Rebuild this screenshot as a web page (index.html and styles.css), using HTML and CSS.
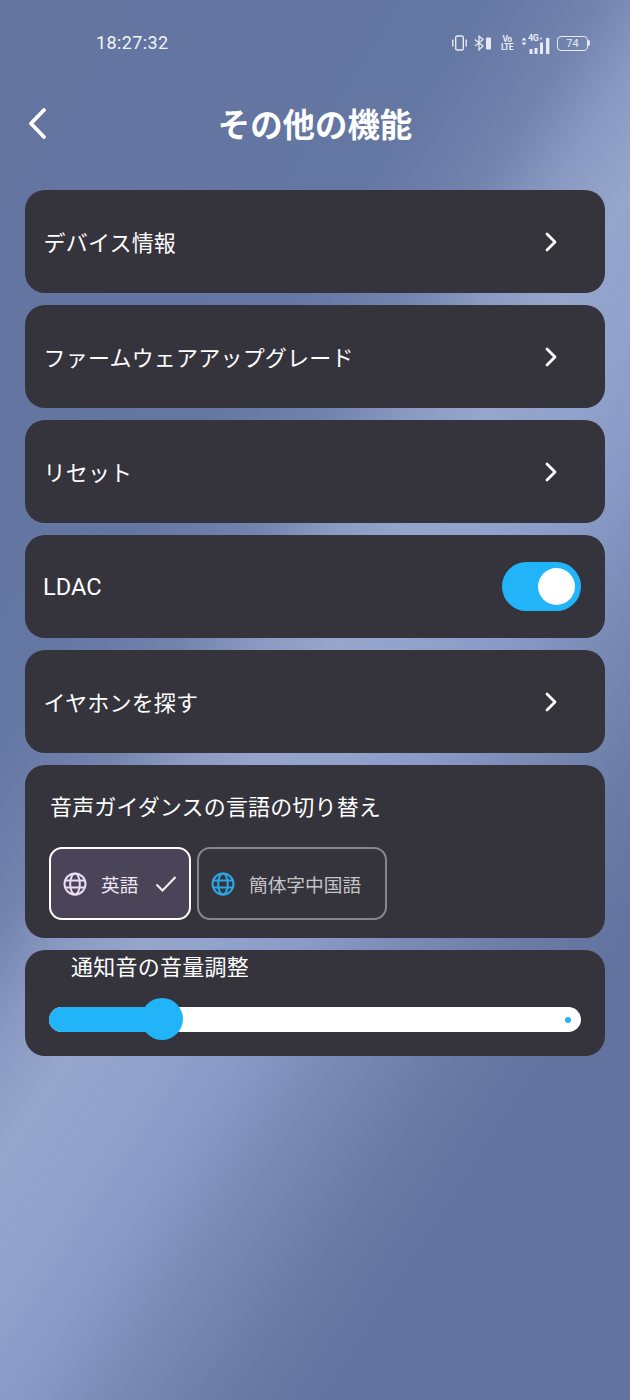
FILE: index.html
```html
<!DOCTYPE html>
<html lang="ja">
<head>
<meta charset="utf-8">
<title>その他の機能</title>
<link rel="stylesheet" href="styles.css">
</head>
<body>
<div class="screen">
  <div class="status">
    <span class="time">18:27:32</span>
    <div class="status-icons">
      <svg class="si-vib" width="15" height="16" viewBox="0 0 15 16" fill="none" stroke="#e6eaf4" stroke-width="1.400"><rect x="3.700" y="1" width="7.600" height="14" rx="1.500"/><path d="M0.800 4.500v7M14.200 4.500v7"/></svg>
      <svg class="si-bt" width="18" height="16" viewBox="0 0 18 16" fill="none" stroke="#e6eaf4" stroke-width="1.300"><path d="M1 4.500l8 6.500-4 3.800V1.200l4 3.300-8 6.500"/><rect x="12" y="2.500" width="5" height="12" rx="0.800" fill="#e6eaf4" stroke="none"/></svg>
      <span class="volte"><span>Vo</span><span>LTE</span></span>
      <span class="signal">
        <span class="net">4G</span>
        <svg width="29" height="17" viewBox="0 0 29 17" fill="#e6eaf4"><path d="M0.500 3.500l2.500-3 2.500 3zM0.500 5.500h5l-2.500 3z"/><circle cx="20" cy="1.500" r="1"/><rect x="8.500" y="12" width="3" height="5"/><rect x="13.500" y="11" width="3" height="6"/><rect x="19" y="5.500" width="3" height="11.500"/><rect x="25" y="1" width="3.400" height="16"/></svg>
      </span>
      <span class="battery"><span class="batt-body">74</span><span class="batt-tip"></span></span>
    </div>
  </div>
  <header class="topbar">
    <svg class="back" width="22" height="32" viewBox="0 0 22 32" fill="none" stroke="#fff" stroke-width="3.800" stroke-linecap="round" stroke-linejoin="round"><path d="M18 3L5 16.500 18 30"/></svg>
    <h1>その他の機能</h1>
  </header>
  <main class="list">
    <div class="card row"><span class="label">デバイス情報</span><svg class="chev" width="14" height="20" viewBox="0 0 14 20" fill="none" stroke="#fff" stroke-width="2.800" stroke-linecap="round" stroke-linejoin="round"><path d="M3 2l8 8-8 8"/></svg></div>
    <div class="card row"><span class="label">ファームウェアアップグレード</span><svg class="chev" width="14" height="20" viewBox="0 0 14 20" fill="none" stroke="#fff" stroke-width="2.800" stroke-linecap="round" stroke-linejoin="round"><path d="M3 2l8 8-8 8"/></svg></div>
    <div class="card row"><span class="label">リセット</span><svg class="chev" width="14" height="20" viewBox="0 0 14 20" fill="none" stroke="#fff" stroke-width="2.800" stroke-linecap="round" stroke-linejoin="round"><path d="M3 2l8 8-8 8"/></svg></div>
    <div class="card row ldac"><span class="latin">LDAC</span><span class="toggle"><span class="knob"></span></span></div>
    <div class="card row"><span class="label">イヤホンを探す</span><svg class="chev" width="14" height="20" viewBox="0 0 14 20" fill="none" stroke="#fff" stroke-width="2.800" stroke-linecap="round" stroke-linejoin="round"><path d="M3 2l8 8-8 8"/></svg></div>
    <div class="card lang">
      <div class="lang-title">音声ガイダンスの言語の切り替え</div>
      <div class="lang-opts">
        <div class="opt active">
          <svg width="24" height="24" viewBox="0 0 24 24" fill="none" stroke="#eadcf5" stroke-width="2"><circle cx="12" cy="12" r="10.500"/><ellipse cx="12" cy="12" rx="4.800" ry="10.500"/><path d="M2 8.500h20M2 15.500h20"/></svg>
          <span class="opt-label">英語</span>
          <svg class="check" width="22" height="18" viewBox="0 0 22 18" fill="none" stroke="#eee" stroke-width="2.200"><path d="M1.500 9.500l6 6L20.500 2"/></svg>
        </div>
        <div class="opt">
          <svg width="24" height="24" viewBox="0 0 24 24" fill="none" stroke="#29a9e8" stroke-width="2"><circle cx="12" cy="12" r="10.500"/><ellipse cx="12" cy="12" rx="4.800" ry="10.500"/><path d="M2 8.500h20M2 15.500h20"/></svg>
          <span class="opt-label">簡体字中国語</span>
        </div>
      </div>
    </div>
    <div class="card volume">
      <div class="vol-title">通知音の音量調整</div>
      <div class="slider">
        <span class="fill"></span>
        <span class="thumb"></span>
        <span class="dot"></span>
      </div>
    </div>
  </main>
</div>
</body>
</html>
```
FILE: styles.css
```css
* { box-sizing: border-box; }
html, body { margin: 0; padding: 0; }
body {
  width: 630px;
  height: 1400px;
  overflow: hidden;
  font-family: "Noto Sans CJK JP", "Noto Sans", sans-serif;
  color: #fff;
}
.screen {
  width: 630px;
  height: 1400px;
  padding: 0 25px;
  background: linear-gradient(123deg, #63749f 0%, #6476a2 31%, #7283ae 39%, #8a9ac2 44%, #95a5cb 49%, #91a2cc 54%, #8a9ac7 60%, #7a8bb6 66%, #6a7ba6 74%, #62739f 80%, #62739f 100%);
}
.status {
  height: 86px;
  padding: 30px 15px 0 71px;
  display: flex;
  justify-content: space-between;
  align-items: flex-start;
}
.time {
  font-family: Roboto, sans-serif;
  font-size: 18px;
  line-height: 26px;
  color: #f2f4f9;
  letter-spacing: 0.4px;
}
.status-icons {
  display: flex;
  align-items: center;
  gap: 7px;
  height: 26px;
}
.si-vib { margin-left: 2px; }
.si-bt { margin-right: 3px; }
.volte {
  display: flex;
  flex-direction: column;
  font-family: Roboto, sans-serif;
  font-size: 8.500px;
  line-height: 8px;
  font-weight: 700;
  letter-spacing: -0.5px;
  color: #e6eaf4;
  align-items: center;
  width: 10px;
  margin-right: 2px;
}
.signal { position: relative; display: block; width: 29px; height: 17px; }
.net {
  position: absolute;
  left: 7px;
  top: -1px;
  font: 700 9px/9px Roboto, sans-serif;
  letter-spacing: -0.3px;
  color: #e6eaf4;
}
.battery { display: flex; align-items: center; }
.batt-body {
  width: 31px;
  height: 15px;
  border: 1.300px solid #e6eaf4;
  border-radius: 4px;
  font: 400 11px/13px Roboto, sans-serif;
  text-align: center;
  color: #e6eaf4;
}
.batt-tip { width: 2px; height: 6px; background: #e6eaf4; border-radius: 0 2px 2px 0; }
.topbar {
  height: 79px;
  display: flex;
  align-items: center;
  justify-content: center;
  position: relative;
}
.topbar h1 {
  margin: 0 0 6px;
  font-size: 32.400px;
  line-height: 48px;
  font-weight: 700;
}
.back { position: absolute; left: 1px; top: 21px; }
.list {
  margin-top: 25px;
  display: flex;
  flex-direction: column;
  gap: 12px;
}
.card {
  background: #35343c;
  border-radius: 20px;
  width: 580px;
}
.row {
  height: 103px;
  padding: 0 47px 0 19px;
  display: flex;
  align-items: center;
  justify-content: space-between;
  font-size: 22px;
}
.label { margin-bottom: 2px; letter-spacing: 0.2px; margin-left: -0.500px; }
.ldac { padding-right: 24px; }
.latin { font-family: Roboto, sans-serif; font-size: 23.600px; margin-left: -1px; }
.chev { flex: none; }
.toggle {
  width: 79px;
  height: 49px;
  border-radius: 25px;
  background: #22b4f9;
  display: flex;
  align-items: center;
  justify-content: flex-end;
  padding-right: 6px;
}
.knob { width: 37px; height: 37px; border-radius: 50%; background: #fff; }
.lang {
  height: 173px;
  padding: 22px 24px 0;
}
.lang-title { font-size: 22px; line-height: 36px; padding-left: 1px; letter-spacing: 0.15px; }
.lang-opts { display: flex; gap: 6px; margin-top: 24px; }
.opt {
  height: 73px;
  width: 190px;
  border: 2px solid #88878c;
  border-radius: 13px;
  display: flex;
  align-items: center;
  padding: 0 0 0 12px;
  gap: 14px;
  color: #c4c4c8;
  font-size: 18.700px;
  white-space: nowrap;
}
.opt.active {
  width: 142px;
  background: #4a4459;
  border-color: #fff;
  color: #efe6f6;
}
.opt.active .check { margin-left: 3px; }
.volume {
  height: 106px;
  padding: 0 24px;
  position: relative;
}
.vol-title { font-size: 22px; line-height: 30px; padding: 0 0 0 22px; letter-spacing: 0.25px; }
.slider {
  margin-top: 27px;
  width: 532px;
  height: 25px;
  border-radius: 13px;
  background: #fff;
  position: relative;
}
.fill { position: absolute; left: 0; top: 0; width: 112px; height: 25px; background: #22b4f9; border-radius: 13px 0 0 13px; }
.thumb { position: absolute; left: 92px; top: -9px; width: 42px; height: 42px; border-radius: 50%; background: #22b4f9; }
.dot { position: absolute; right: 10px; top: 10px; width: 6px; height: 6px; border-radius: 50%; background: #22b4f9; }
```
